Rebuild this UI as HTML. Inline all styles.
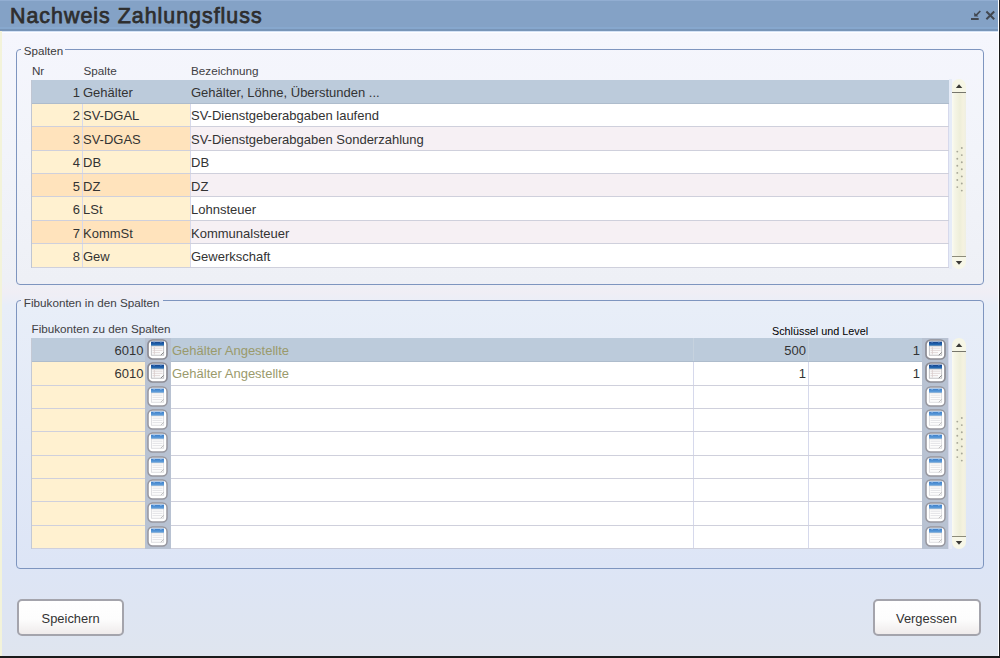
<!DOCTYPE html><html><head><meta charset="utf-8"><style>
html,body{margin:0;padding:0;width:1000px;height:658px;overflow:hidden;}
body{position:relative;font-family:"Liberation Sans",sans-serif;background:linear-gradient(#f5f6fd 33px,#f2f4fa 150px,#eef0f6 280px,#f0eef5 292px,#e8eef8 306px,#dde5f6 565px,#dfe5ef 656px);}
.t{position:absolute;white-space:nowrap;line-height:1;}
.r{position:absolute;}
.fs{position:absolute;border:1px solid #7e95bf;border-radius:4px;box-sizing:border-box;}
.ic{position:absolute;width:20px;height:20px;box-sizing:border-box;border:1.5px solid #8e8e96;border-radius:5px;background:#fff;}
.ic i{position:absolute;left:3px;top:2px;width:12px;height:4px;background:#2a6cb0;}
.ic b{position:absolute;left:3px;top:6px;width:12px;height:9px;background:#e4e4e8;border-bottom:1px solid #b0b0b8;}
.btn{position:absolute;box-sizing:border-box;border:2px solid #a4a4ac;border-radius:5px;background:linear-gradient(#ffffff 0%,#fdfdfd 55%,#efebeb 100%);}
</style></head><body>
<svg width="0" height="0" style="position:absolute">
<defs>
<linearGradient id="bd" x1="0" y1="0" x2="0" y2="1"><stop offset="0" stop-color="#123f8a"/><stop offset="1" stop-color="#2c7cc4"/></linearGradient>
<linearGradient id="bl" x1="0" y1="0" x2="0" y2="1"><stop offset="0" stop-color="#3a7cc8"/><stop offset="1" stop-color="#6aa8e0"/></linearGradient>
<symbol id="icd" viewBox="0 0 21 21">
<rect x="1" y="1" width="19" height="19" rx="4.5" fill="#fff" stroke="#8c8c94" stroke-width="1.7"/>
<path d="M4 2.6H17V7H4z" fill="url(#bd)"/><path d="M6.5 2.6h1.2v1.2h-1.2zM13.3 2.6h1.2v1.2h-1.2z" fill="#6a9ad0"/>
<rect x="4.3" y="7" width="12.4" height="9.2" fill="#fafafa" stroke="#b4b4b8" stroke-width="0.8"/>
<path d="M5.5 9.2H15.5M5.5 11.4H15.5M5.5 13.6H13" stroke="#dcd0d0" stroke-width="0.8"/>
<path d="M7.4 8V15.5" stroke="#d8cccc" stroke-width="0.8"/>
<path d="M13.8 16.2L16.7 13.3" stroke="#8a8a8a" stroke-width="1"/>
</symbol>
<symbol id="icl" viewBox="0 0 21 21">
<rect x="1" y="1" width="19" height="19" rx="4.5" fill="#fff" stroke="#96969e" stroke-width="1.5"/>
<path d="M4 2.6H17V7H4z" fill="url(#bl)"/><path d="M6.5 2.6h1.2v1.2h-1.2zM13.3 2.6h1.2v1.2h-1.2z" fill="#a8c8ec"/>
<rect x="4.3" y="7" width="12.4" height="9.2" fill="#fdfdfd" stroke="#d0d0d4" stroke-width="0.7"/>
<path d="M5.5 9.2H15.5M5.5 11.4H15.5M5.5 13.6H15.5" stroke="#dcdcdf" stroke-width="0.8"/>
<path d="M13.8 16.2L16.7 13.3" stroke="#b0b0b0" stroke-width="0.8"/>
</symbol>
</defs></svg>

<div class="r" style="left:0px;top:0px;width:998px;height:31px;background:#84a2c6;"></div>
<div class="r" style="left:0px;top:0px;width:998px;height:1px;background:#92aed2;"></div>
<div class="r" style="left:0px;top:27px;width:998px;height:2px;background:#87a8ce;"></div>
<div class="r" style="left:0px;top:29px;width:998px;height:2px;background:#7895b8;"></div>
<div class="r" style="left:0px;top:31px;width:998px;height:1px;background:#d4e2f6;"></div>
<div class="r" style="left:0px;top:32px;width:998px;height:1px;background:#fdfdff;"></div>
<div class="t" style="left:10px;top:6.18px;font-size:21.4px;color:#2e2e2e;letter-spacing:1px;-webkit-text-stroke:0.75px #2e2e2e;">Nachweis Zahlungsfluss</div>
<svg style="position:absolute;left:965px;top:3px" width="35" height="25" viewBox="0 0 35 25">
<path d="M6 16H13.7" stroke="#424851" stroke-width="2"/>
<path d="M15.3 8L11 12.3" stroke="#424851" stroke-width="1.7"/>
<path d="M9.2 9.4V13.6H13.4z" fill="#424851"/>
<path d="M21.4 8.5L29.2 16.3M29.2 8.5L21.4 16.3" stroke="#424851" stroke-width="2"/>
</svg>
<div class="fs" style="left:16px;top:49px;width:968px;height:236px"></div>
<div class="r" style="left:21px;top:44px;width:44px;height:10px;background:#f4f5fc;"></div>
<div class="t" style="left:23.8px;top:44.58px;font-size:11.6px;color:#3a3a3a;">Spalten</div>
<div class="t" style="left:31.9px;top:65.30px;font-size:11.7px;color:#404044;">Nr</div>
<div class="t" style="left:83.5px;top:65.30px;font-size:11.7px;color:#404044;">Spalte</div>
<div class="t" style="left:191px;top:65.30px;font-size:11.7px;color:#404044;">Bezeichnung</div>
<div class="r" style="left:31px;top:80px;width:918px;height:188px;background:#cfd0dc;"></div>
<div class="r" style="left:31px;top:80px;width:918px;height:23px;background:#bccbdb;"></div>
<div class="r" style="left:31px;top:103px;width:918px;height:1px;background:#aebccc;"></div>
<div class="t" style="right:920px;top:86.00px;font-size:13px;color:#333333;">1</div>
<div class="t" style="left:83px;top:86.00px;font-size:13px;color:#333333;">Gehälter</div>
<div class="t" style="left:191px;top:86.00px;font-size:13px;color:#333333;">Gehälter, Löhne, Überstunden ...</div>
<div class="r" style="left:31px;top:104px;width:51px;height:22px;background:#fff1d0;"></div>
<div class="r" style="left:82px;top:104px;width:1px;height:22px;background:#d6d9ec;"></div>
<div class="r" style="left:83px;top:104px;width:107px;height:22px;background:#fff1d0;"></div>
<div class="r" style="left:190px;top:104px;width:1px;height:22px;background:#d6d9ec;"></div>
<div class="r" style="left:191px;top:104px;width:757px;height:22px;background:#ffffff;"></div>
<div class="r" style="left:948px;top:104px;width:1px;height:22px;background:#d6d9ec;"></div>
<div class="t" style="right:920px;top:109.43px;font-size:13px;color:#333333;">2</div>
<div class="t" style="left:83px;top:109.43px;font-size:13px;color:#333333;">SV-DGAL</div>
<div class="t" style="left:191px;top:109.43px;font-size:13px;color:#333333;">SV-Dienstgeberabgaben laufend</div>
<div class="r" style="left:31px;top:127px;width:51px;height:23px;background:#ffe3bc;"></div>
<div class="r" style="left:82px;top:127px;width:1px;height:23px;background:#d6d9ec;"></div>
<div class="r" style="left:83px;top:127px;width:107px;height:23px;background:#ffe3bc;"></div>
<div class="r" style="left:190px;top:127px;width:1px;height:23px;background:#d6d9ec;"></div>
<div class="r" style="left:191px;top:127px;width:757px;height:23px;background:#f6f0f4;"></div>
<div class="r" style="left:948px;top:127px;width:1px;height:23px;background:#d6d9ec;"></div>
<div class="t" style="right:920px;top:132.86px;font-size:13px;color:#333333;">3</div>
<div class="t" style="left:83px;top:132.86px;font-size:13px;color:#333333;">SV-DGAS</div>
<div class="t" style="left:191px;top:132.86px;font-size:13px;color:#333333;">SV-Dienstgeberabgaben Sonderzahlung</div>
<div class="r" style="left:31px;top:151px;width:51px;height:22px;background:#fff1d0;"></div>
<div class="r" style="left:82px;top:151px;width:1px;height:22px;background:#d6d9ec;"></div>
<div class="r" style="left:83px;top:151px;width:107px;height:22px;background:#fff1d0;"></div>
<div class="r" style="left:190px;top:151px;width:1px;height:22px;background:#d6d9ec;"></div>
<div class="r" style="left:191px;top:151px;width:757px;height:22px;background:#ffffff;"></div>
<div class="r" style="left:948px;top:151px;width:1px;height:22px;background:#d6d9ec;"></div>
<div class="t" style="right:920px;top:156.29px;font-size:13px;color:#333333;">4</div>
<div class="t" style="left:83px;top:156.29px;font-size:13px;color:#333333;">DB</div>
<div class="t" style="left:191px;top:156.29px;font-size:13px;color:#333333;">DB</div>
<div class="r" style="left:31px;top:174px;width:51px;height:22px;background:#ffe3bc;"></div>
<div class="r" style="left:82px;top:174px;width:1px;height:22px;background:#d6d9ec;"></div>
<div class="r" style="left:83px;top:174px;width:107px;height:22px;background:#ffe3bc;"></div>
<div class="r" style="left:190px;top:174px;width:1px;height:22px;background:#d6d9ec;"></div>
<div class="r" style="left:191px;top:174px;width:757px;height:22px;background:#f6f0f4;"></div>
<div class="r" style="left:948px;top:174px;width:1px;height:22px;background:#d6d9ec;"></div>
<div class="t" style="right:920px;top:179.72px;font-size:13px;color:#333333;">5</div>
<div class="t" style="left:83px;top:179.72px;font-size:13px;color:#333333;">DZ</div>
<div class="t" style="left:191px;top:179.72px;font-size:13px;color:#333333;">DZ</div>
<div class="r" style="left:31px;top:197px;width:51px;height:23px;background:#fff1d0;"></div>
<div class="r" style="left:82px;top:197px;width:1px;height:23px;background:#d6d9ec;"></div>
<div class="r" style="left:83px;top:197px;width:107px;height:23px;background:#fff1d0;"></div>
<div class="r" style="left:190px;top:197px;width:1px;height:23px;background:#d6d9ec;"></div>
<div class="r" style="left:191px;top:197px;width:757px;height:23px;background:#ffffff;"></div>
<div class="r" style="left:948px;top:197px;width:1px;height:23px;background:#d6d9ec;"></div>
<div class="t" style="right:920px;top:203.15px;font-size:13px;color:#333333;">6</div>
<div class="t" style="left:83px;top:203.15px;font-size:13px;color:#333333;">LSt</div>
<div class="t" style="left:191px;top:203.15px;font-size:13px;color:#333333;">Lohnsteuer</div>
<div class="r" style="left:31px;top:221px;width:51px;height:22px;background:#ffe3bc;"></div>
<div class="r" style="left:82px;top:221px;width:1px;height:22px;background:#d6d9ec;"></div>
<div class="r" style="left:83px;top:221px;width:107px;height:22px;background:#ffe3bc;"></div>
<div class="r" style="left:190px;top:221px;width:1px;height:22px;background:#d6d9ec;"></div>
<div class="r" style="left:191px;top:221px;width:757px;height:22px;background:#f6f0f4;"></div>
<div class="r" style="left:948px;top:221px;width:1px;height:22px;background:#d6d9ec;"></div>
<div class="t" style="right:920px;top:226.58px;font-size:13px;color:#333333;">7</div>
<div class="t" style="left:83px;top:226.58px;font-size:13px;color:#333333;">KommSt</div>
<div class="t" style="left:191px;top:226.58px;font-size:13px;color:#333333;">Kommunalsteuer</div>
<div class="r" style="left:31px;top:244px;width:51px;height:23px;background:#fff1d0;"></div>
<div class="r" style="left:82px;top:244px;width:1px;height:23px;background:#d6d9ec;"></div>
<div class="r" style="left:83px;top:244px;width:107px;height:23px;background:#fff1d0;"></div>
<div class="r" style="left:190px;top:244px;width:1px;height:23px;background:#d6d9ec;"></div>
<div class="r" style="left:191px;top:244px;width:757px;height:23px;background:#ffffff;"></div>
<div class="r" style="left:948px;top:244px;width:1px;height:23px;background:#d6d9ec;"></div>
<div class="t" style="right:920px;top:250.01px;font-size:13px;color:#333333;">8</div>
<div class="t" style="left:83px;top:250.01px;font-size:13px;color:#333333;">Gew</div>
<div class="t" style="left:191px;top:250.01px;font-size:13px;color:#333333;">Gewerkschaft</div>
<div class="r" style="left:31px;top:80px;width:1px;height:188px;background:#c0c6d2;"></div>
<div class="r" style="left:952px;top:89px;width:14px;height:169.5px;background:linear-gradient(90deg,#fbfbf3 0,#f6f6e8 2px,#f2f2e0 5px,#eeeed9 8px,#f5f2df 11px,#efefe2 14px)"></div>
<div class="r" style="left:949px;top:79px;width:3px;height:189.5px;background:#e6ecf8"></div>
<div class="r" style="left:952px;top:79px;width:14px;height:14px;background:#f6f6e6;border-radius:7px 7px 0 0;border-bottom:1.4px solid #76766c;box-sizing:border-box"></div>
<svg style="position:absolute;left:952px;top:79px" width="14" height="14"><path d="M3.8 8.9L7.05 5.3L10.3 8.9z" fill="#3a3a36"/></svg>
<div class="r" style="left:952px;top:255.5px;width:14px;height:13px;background:#f7f7e8;border-radius:0 0 7px 7px;border-top:1.3px solid #8c8c7a;box-sizing:border-box"></div>
<svg style="position:absolute;left:952px;top:255.5px" width="14" height="13"><path d="M3.8 5L10.2 5L7 8.8z" fill="#3a3a36"/></svg>
<svg style="position:absolute;left:955.5px;top:146.8px" width="9" height="46"><circle cx="5.8" cy="1.00" r="0.95" fill="#a8a898"/><circle cx="5.8" cy="8.10" r="0.95" fill="#a8a898"/><circle cx="5.8" cy="15.20" r="0.95" fill="#a8a898"/><circle cx="5.8" cy="22.30" r="0.95" fill="#a8a898"/><circle cx="5.8" cy="29.40" r="0.95" fill="#a8a898"/><circle cx="5.8" cy="36.50" r="0.95" fill="#a8a898"/><circle cx="5.8" cy="43.60" r="0.95" fill="#a8a898"/><circle cx="1.3" cy="4.60" r="0.95" fill="#a8a898"/><circle cx="1.3" cy="11.70" r="0.95" fill="#a8a898"/><circle cx="1.3" cy="18.80" r="0.95" fill="#a8a898"/><circle cx="1.3" cy="25.90" r="0.95" fill="#a8a898"/><circle cx="1.3" cy="33.00" r="0.95" fill="#a8a898"/><circle cx="1.3" cy="40.10" r="0.95" fill="#a8a898"/></svg>
<div class="fs" style="left:16px;top:300px;width:968px;height:269px"></div>
<div class="r" style="left:21px;top:295px;width:142px;height:10px;background:linear-gradient(#f0eef5,#e9eef8);"></div>
<div class="t" style="left:23.8px;top:296.50px;font-size:11.7px;color:#404044;">Fibukonten in den Spalten</div>
<div class="t" style="left:31.5px;top:323.30px;font-size:11.7px;color:#404044;">Fibukonten zu den Spalten</div>
<div class="t" style="left:772px;top:326.26px;font-size:10.8px;color:#000;">Schlüssel und Level</div>
<div class="r" style="left:31px;top:338px;width:918px;height:211px;background:#cfd0dc;"></div>
<div class="r" style="left:31px;top:338px;width:891px;height:23px;background:#bccbdb;"></div>
<div class="r" style="left:31px;top:361px;width:891px;height:1px;background:#aebccc;"></div>
<div class="r" style="left:693px;top:338px;width:1px;height:23px;background:#c6d2de;"></div>
<div class="r" style="left:808px;top:338px;width:1px;height:23px;background:#c6d2de;"></div>
<div class="r" style="left:145px;top:338px;width:26px;height:24px;background:#b8c2d2;"></div>
<div class="r" style="left:922px;top:338px;width:26px;height:24px;background:#b8c2d2;"></div>
<svg style="position:absolute;left:147.2px;top:338.90px" width="21" height="21"><use href="#icd"/></svg>
<svg style="position:absolute;left:925px;top:338.90px" width="21" height="21"><use href="#icd"/></svg>
<div class="t" style="right:856.5px;top:343.70px;font-size:13px;color:#333333;">6010</div>
<div class="t" style="left:172px;top:343.70px;font-size:13px;color:#9a9a6c;">Gehälter Angestellte</div>
<div class="t" style="right:194px;top:343.70px;font-size:13px;color:#333333;">500</div>
<div class="t" style="right:80px;top:343.70px;font-size:13px;color:#333333;">1</div>
<div class="r" style="left:31px;top:362px;width:114px;height:23px;background:#fff1d0;"></div>
<div class="r" style="left:171px;top:362px;width:522px;height:23px;background:#ffffff;"></div>
<div class="r" style="left:693px;top:362px;width:1px;height:23px;background:#d6d9ec;"></div>
<div class="r" style="left:694px;top:362px;width:114px;height:23px;background:#ffffff;"></div>
<div class="r" style="left:808px;top:362px;width:1px;height:23px;background:#d6d9ec;"></div>
<div class="r" style="left:809px;top:362px;width:113px;height:23px;background:#ffffff;"></div>
<div class="r" style="left:145px;top:362px;width:26px;height:24px;background:#b8c2d2;"></div>
<div class="r" style="left:922px;top:362px;width:26px;height:24px;background:#b8c2d2;"></div>
<svg style="position:absolute;left:147.2px;top:362.26px" width="21" height="21"><use href="#icd"/></svg>
<svg style="position:absolute;left:925px;top:362.26px" width="21" height="21"><use href="#icd"/></svg>
<div class="t" style="right:856.5px;top:367.06px;font-size:13px;color:#333333;">6010</div>
<div class="t" style="left:172px;top:367.06px;font-size:13px;color:#9a9a6c;">Gehälter Angestellte</div>
<div class="t" style="right:194px;top:367.06px;font-size:13px;color:#333333;">1</div>
<div class="t" style="right:80px;top:367.06px;font-size:13px;color:#333333;">1</div>
<div class="r" style="left:31px;top:386px;width:114px;height:22px;background:#fff1d0;"></div>
<div class="r" style="left:171px;top:386px;width:522px;height:22px;background:#ffffff;"></div>
<div class="r" style="left:693px;top:386px;width:1px;height:22px;background:#d6d9ec;"></div>
<div class="r" style="left:694px;top:386px;width:114px;height:22px;background:#ffffff;"></div>
<div class="r" style="left:808px;top:386px;width:1px;height:22px;background:#d6d9ec;"></div>
<div class="r" style="left:809px;top:386px;width:113px;height:22px;background:#ffffff;"></div>
<div class="r" style="left:145px;top:386px;width:26px;height:23px;background:#b8c2d2;"></div>
<div class="r" style="left:922px;top:386px;width:26px;height:23px;background:#b8c2d2;"></div>
<svg style="position:absolute;left:147.2px;top:385.62px" width="21" height="21"><use href="#icl"/></svg>
<svg style="position:absolute;left:925px;top:385.62px" width="21" height="21"><use href="#icl"/></svg>
<div class="r" style="left:31px;top:409px;width:114px;height:22px;background:#fff1d0;"></div>
<div class="r" style="left:171px;top:409px;width:522px;height:22px;background:#ffffff;"></div>
<div class="r" style="left:693px;top:409px;width:1px;height:22px;background:#d6d9ec;"></div>
<div class="r" style="left:694px;top:409px;width:114px;height:22px;background:#ffffff;"></div>
<div class="r" style="left:808px;top:409px;width:1px;height:22px;background:#d6d9ec;"></div>
<div class="r" style="left:809px;top:409px;width:113px;height:22px;background:#ffffff;"></div>
<div class="r" style="left:145px;top:409px;width:26px;height:23px;background:#b8c2d2;"></div>
<div class="r" style="left:922px;top:409px;width:26px;height:23px;background:#b8c2d2;"></div>
<svg style="position:absolute;left:147.2px;top:408.98px" width="21" height="21"><use href="#icl"/></svg>
<svg style="position:absolute;left:925px;top:408.98px" width="21" height="21"><use href="#icl"/></svg>
<div class="r" style="left:31px;top:432px;width:114px;height:23px;background:#fff1d0;"></div>
<div class="r" style="left:171px;top:432px;width:522px;height:23px;background:#ffffff;"></div>
<div class="r" style="left:693px;top:432px;width:1px;height:23px;background:#d6d9ec;"></div>
<div class="r" style="left:694px;top:432px;width:114px;height:23px;background:#ffffff;"></div>
<div class="r" style="left:808px;top:432px;width:1px;height:23px;background:#d6d9ec;"></div>
<div class="r" style="left:809px;top:432px;width:113px;height:23px;background:#ffffff;"></div>
<div class="r" style="left:145px;top:432px;width:26px;height:24px;background:#b8c2d2;"></div>
<div class="r" style="left:922px;top:432px;width:26px;height:24px;background:#b8c2d2;"></div>
<svg style="position:absolute;left:147.2px;top:432.34px" width="21" height="21"><use href="#icl"/></svg>
<svg style="position:absolute;left:925px;top:432.34px" width="21" height="21"><use href="#icl"/></svg>
<div class="r" style="left:31px;top:456px;width:114px;height:22px;background:#fff1d0;"></div>
<div class="r" style="left:171px;top:456px;width:522px;height:22px;background:#ffffff;"></div>
<div class="r" style="left:693px;top:456px;width:1px;height:22px;background:#d6d9ec;"></div>
<div class="r" style="left:694px;top:456px;width:114px;height:22px;background:#ffffff;"></div>
<div class="r" style="left:808px;top:456px;width:1px;height:22px;background:#d6d9ec;"></div>
<div class="r" style="left:809px;top:456px;width:113px;height:22px;background:#ffffff;"></div>
<div class="r" style="left:145px;top:456px;width:26px;height:23px;background:#b8c2d2;"></div>
<div class="r" style="left:922px;top:456px;width:26px;height:23px;background:#b8c2d2;"></div>
<svg style="position:absolute;left:147.2px;top:455.70px" width="21" height="21"><use href="#icl"/></svg>
<svg style="position:absolute;left:925px;top:455.70px" width="21" height="21"><use href="#icl"/></svg>
<div class="r" style="left:31px;top:479px;width:114px;height:22px;background:#fff1d0;"></div>
<div class="r" style="left:171px;top:479px;width:522px;height:22px;background:#ffffff;"></div>
<div class="r" style="left:693px;top:479px;width:1px;height:22px;background:#d6d9ec;"></div>
<div class="r" style="left:694px;top:479px;width:114px;height:22px;background:#ffffff;"></div>
<div class="r" style="left:808px;top:479px;width:1px;height:22px;background:#d6d9ec;"></div>
<div class="r" style="left:809px;top:479px;width:113px;height:22px;background:#ffffff;"></div>
<div class="r" style="left:145px;top:479px;width:26px;height:23px;background:#b8c2d2;"></div>
<div class="r" style="left:922px;top:479px;width:26px;height:23px;background:#b8c2d2;"></div>
<svg style="position:absolute;left:147.2px;top:479.06px" width="21" height="21"><use href="#icl"/></svg>
<svg style="position:absolute;left:925px;top:479.06px" width="21" height="21"><use href="#icl"/></svg>
<div class="r" style="left:31px;top:502px;width:114px;height:23px;background:#fff1d0;"></div>
<div class="r" style="left:171px;top:502px;width:522px;height:23px;background:#ffffff;"></div>
<div class="r" style="left:693px;top:502px;width:1px;height:23px;background:#d6d9ec;"></div>
<div class="r" style="left:694px;top:502px;width:114px;height:23px;background:#ffffff;"></div>
<div class="r" style="left:808px;top:502px;width:1px;height:23px;background:#d6d9ec;"></div>
<div class="r" style="left:809px;top:502px;width:113px;height:23px;background:#ffffff;"></div>
<div class="r" style="left:145px;top:502px;width:26px;height:24px;background:#b8c2d2;"></div>
<div class="r" style="left:922px;top:502px;width:26px;height:24px;background:#b8c2d2;"></div>
<svg style="position:absolute;left:147.2px;top:502.42px" width="21" height="21"><use href="#icl"/></svg>
<svg style="position:absolute;left:925px;top:502.42px" width="21" height="21"><use href="#icl"/></svg>
<div class="r" style="left:31px;top:526px;width:114px;height:22px;background:#fff1d0;"></div>
<div class="r" style="left:171px;top:526px;width:522px;height:22px;background:#ffffff;"></div>
<div class="r" style="left:693px;top:526px;width:1px;height:22px;background:#d6d9ec;"></div>
<div class="r" style="left:694px;top:526px;width:114px;height:22px;background:#ffffff;"></div>
<div class="r" style="left:808px;top:526px;width:1px;height:22px;background:#d6d9ec;"></div>
<div class="r" style="left:809px;top:526px;width:113px;height:22px;background:#ffffff;"></div>
<div class="r" style="left:145px;top:526px;width:26px;height:23px;background:#b8c2d2;"></div>
<div class="r" style="left:922px;top:526px;width:26px;height:23px;background:#b8c2d2;"></div>
<svg style="position:absolute;left:147.2px;top:525.78px" width="21" height="21"><use href="#icl"/></svg>
<svg style="position:absolute;left:925px;top:525.78px" width="21" height="21"><use href="#icl"/></svg>
<div class="r" style="left:948px;top:338px;width:1px;height:211px;background:#d6d9ec;"></div>
<div class="r" style="left:31px;top:338px;width:1px;height:211px;background:#c4c9d4;"></div>
<div class="r" style="left:952px;top:348px;width:14px;height:191.2px;background:linear-gradient(90deg,#fbfbf3 0,#f6f6e8 2px,#f2f2e0 5px,#eeeed9 8px,#f5f2df 11px,#efefe2 14px)"></div>
<div class="r" style="left:949px;top:338px;width:3px;height:211.2px;background:#e6ecf8"></div>
<div class="r" style="left:952px;top:338px;width:14px;height:14px;background:#f6f6e6;border-radius:7px 7px 0 0;border-bottom:1.4px solid #76766c;box-sizing:border-box"></div>
<svg style="position:absolute;left:952px;top:338px" width="14" height="14"><path d="M3.8 8.9L7.05 5.3L10.3 8.9z" fill="#3a3a36"/></svg>
<div class="r" style="left:952px;top:536.2px;width:14px;height:13px;background:#f7f7e8;border-radius:0 0 7px 7px;border-top:1.3px solid #8c8c7a;box-sizing:border-box"></div>
<svg style="position:absolute;left:952px;top:536.2px" width="14" height="13"><path d="M3.8 5L10.2 5L7 8.8z" fill="#3a3a36"/></svg>
<svg style="position:absolute;left:956.3px;top:417px" width="9" height="46"><circle cx="5.8" cy="1.00" r="0.95" fill="#a8a898"/><circle cx="5.8" cy="8.10" r="0.95" fill="#a8a898"/><circle cx="5.8" cy="15.20" r="0.95" fill="#a8a898"/><circle cx="5.8" cy="22.30" r="0.95" fill="#a8a898"/><circle cx="5.8" cy="29.40" r="0.95" fill="#a8a898"/><circle cx="5.8" cy="36.50" r="0.95" fill="#a8a898"/><circle cx="5.8" cy="43.60" r="0.95" fill="#a8a898"/><circle cx="1.3" cy="4.60" r="0.95" fill="#a8a898"/><circle cx="1.3" cy="11.70" r="0.95" fill="#a8a898"/><circle cx="1.3" cy="18.80" r="0.95" fill="#a8a898"/><circle cx="1.3" cy="25.90" r="0.95" fill="#a8a898"/><circle cx="1.3" cy="33.00" r="0.95" fill="#a8a898"/><circle cx="1.3" cy="40.10" r="0.95" fill="#a8a898"/></svg>
<div class="btn" style="left:17px;top:599px;width:107px;height:37.3px"></div>
<div class="t" style="left:41.6px;top:612.78px;font-size:12.9px;color:#333;">Speichern</div>
<div class="btn" style="left:873px;top:599px;width:107.5px;height:37.3px"></div>
<div class="t" style="left:896px;top:612.78px;font-size:12.9px;color:#333;">Vergessen</div>
<div class="r" style="left:0px;top:31px;width:2px;height:627px;background:#f3f3da;"></div>
<div class="r" style="left:998px;top:0px;width:1px;height:658px;background:#ffffff;"></div>
<div class="r" style="left:999px;top:0px;width:1px;height:658px;background:#1a1a1a;"></div>
<div class="r" style="left:0px;top:656px;width:1000px;height:2px;background:#1a1a1a;"></div>
</body></html>
